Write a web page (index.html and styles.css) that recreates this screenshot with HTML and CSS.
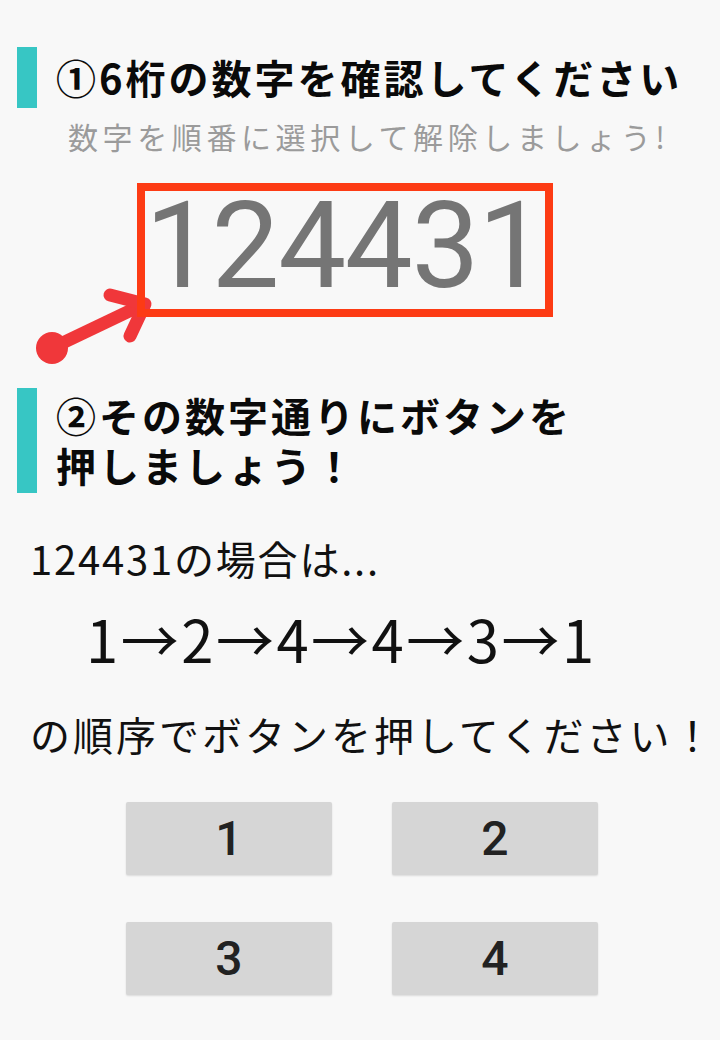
FILE: index.html
```html
<!DOCTYPE html>
<html lang="ja">
<head>
<meta charset="utf-8">
<title>解除</title>
<link rel="stylesheet" href="styles.css">
</head>
<body>
<div class="page">
  <svg class="arrow" width="720" height="400" viewBox="0 0 720 400" aria-hidden="true">
    <g stroke="#f0373a" stroke-width="13" stroke-linecap="round" stroke-linejoin="round" fill="none">
      <line x1="52" y1="348" x2="142" y2="305"/>
      <polyline points="110,295 145,304 130,336"/>
    </g>
    <circle cx="52" cy="348" r="16" fill="#f0373a"/>
  </svg>

  <h1 class="heading heading-one">①6桁の数字を確認してください</h1>
  <p class="subtitle">数字を順番に選択して解除しましょう!</p>
  <div class="code-box">124431</div>

  <h2 class="heading heading-two">②その数字通りにボタンを<br>押しましょう！</h2>

  <p class="body-text example">124431の場合は...</p>
  <p class="sequence">1→2→4→4→3→1</p>
  <p class="body-text order">の順序でボタンを押してください！</p>

  <div class="pad">
    <button class="key" type="button">1</button>
    <button class="key" type="button">2</button>
    <button class="key" type="button">3</button>
    <button class="key" type="button">4</button>
  </div>
</div>
</body>
</html>
```

FILE: styles.css
```css
html, body {
  margin: 0;
  padding: 0;
  background: #f8f8f8;
}

body {
  font-family: "Noto Sans CJK JP", "Noto Sans", sans-serif;
  color: #111;
}

.page {
  position: relative;
  width: 720px;
  min-height: 1040px;
  overflow: hidden;
}

.arrow {
  position: absolute;
  left: 0;
  top: 0;
  pointer-events: none;
}

.heading {
  margin: 0 0 0 17px;
  border-left: 20px solid #37c6c4;
  padding-left: 19px;
  font-size: 40px;
  font-weight: 700;
  line-height: 50px;
  letter-spacing: 3px;
  color: #0a0a0a;
}

.heading-one {
  margin-top: 47px;
  padding-top: 5px;
  padding-bottom: 6px;
}

.heading-two {
  margin-top: 71px;
  padding-top: 2px;
  padding-bottom: 3px;
}

.subtitle {
  margin: 10px 0 0 68px;
  font-size: 30px;
  line-height: 36px;
  letter-spacing: 4.6px;
  color: #9b9b9b;
}

.code-box {
  position: relative;
  z-index: 1;
  width: fit-content;
  margin: 29px 0 0 137px;
  border: 8px solid #fd3b14;
  padding: 0 0 7px;
  font-family: Roboto, "Noto Sans", sans-serif;
  font-size: 121px;
  font-weight: 400;
  line-height: 111px;
  letter-spacing: -1.4px;
  color: #757575;
}

.body-text {
  margin: 0 0 0 30px;
  font-size: 40px;
  line-height: 50px;
  letter-spacing: 3px;
}

.example {
  margin-top: 40px;
  letter-spacing: 1.8px;
}

.sequence {
  margin: 20px 0 0 86px;
  font-size: 58px;
  line-height: 70px;
  letter-spacing: 2.5px;
  color: #111;
}

.order {
  margin-top: 36px;
}

.pad {
  display: grid;
  grid-template-columns: 206px 206px;
  grid-auto-rows: 73px;
  column-gap: 60px;
  row-gap: 47px;
  margin: 43px 0 0 126px;
}

.key {
  border: none;
  border-radius: 2px;
  background: #d6d6d6;
  box-shadow: 0 1px 2px rgba(0, 0, 0, 0.12);
  font-family: Roboto, "Noto Sans", sans-serif;
  font-size: 48px;
  font-weight: 500;
  color: #222;
  padding: 0;
  line-height: 73px;
}
```
